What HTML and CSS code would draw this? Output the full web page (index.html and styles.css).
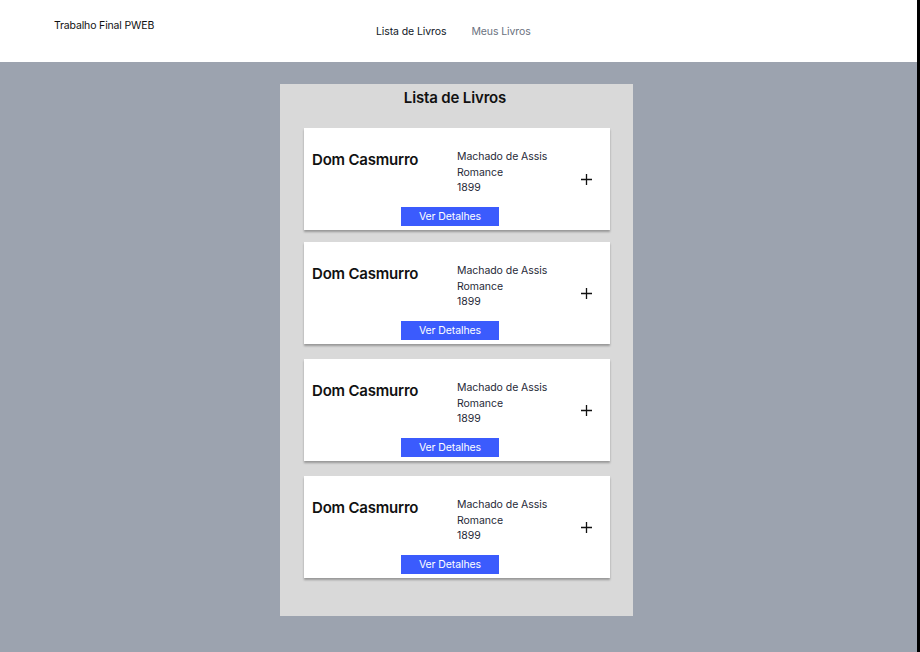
FILE: index.html
```html
<!DOCTYPE html>
<html lang="pt">
<head>
<meta charset="utf-8">
<title>Trabalho Final PWEB</title>
<link rel="stylesheet" href="styles.css">
</head>
<body>
<div class="page">
  <header class="header">
    <div class="brand">Trabalho Final PWEB</div>
    <nav class="nav">
      <a class="nav-link active" href="#">Lista de Livros</a>
      <a class="nav-link" href="#">Meus Livros</a>
    </nav>
  </header>
  <main class="main">
    <section class="panel">
      <h1 class="panel-title">Lista de Livros</h1>
      <div class="cards">
        <article class="card">
          <div class="card-row">
            <h2 class="book-title">Dom Casmurro</h2>
            <div class="book-info"><div>Machado de Assis</div><div>Romance</div><div>1899</div></div>
            <svg class="plus" width="11" height="11" viewBox="0 0 11 11"><path d="M5.5 0v11M0 5.5h11" stroke="#111" stroke-width="1.3"/></svg>
          </div>
          <button class="btn">Ver Detalhes</button>
        </article>
        <article class="card">
          <div class="card-row">
            <h2 class="book-title">Dom Casmurro</h2>
            <div class="book-info"><div>Machado de Assis</div><div>Romance</div><div>1899</div></div>
            <svg class="plus" width="11" height="11" viewBox="0 0 11 11"><path d="M5.5 0v11M0 5.5h11" stroke="#111" stroke-width="1.3"/></svg>
          </div>
          <button class="btn">Ver Detalhes</button>
        </article>
        <article class="card">
          <div class="card-row">
            <h2 class="book-title">Dom Casmurro</h2>
            <div class="book-info"><div>Machado de Assis</div><div>Romance</div><div>1899</div></div>
            <svg class="plus" width="11" height="11" viewBox="0 0 11 11"><path d="M5.5 0v11M0 5.5h11" stroke="#111" stroke-width="1.3"/></svg>
          </div>
          <button class="btn">Ver Detalhes</button>
        </article>
        <article class="card">
          <div class="card-row">
            <h2 class="book-title">Dom Casmurro</h2>
            <div class="book-info"><div>Machado de Assis</div><div>Romance</div><div>1899</div></div>
            <svg class="plus" width="11" height="11" viewBox="0 0 11 11"><path d="M5.5 0v11M0 5.5h11" stroke="#111" stroke-width="1.3"/></svg>
          </div>
          <button class="btn">Ver Detalhes</button>
        </article>
      </div>
    </section>
  </main>
</div>
</body>
</html>
```
FILE: styles.css
```css
* { box-sizing: border-box; }
html, body { margin: 0; padding: 0; height: 100%; }
body {
  font-family: Inter, "Noto Sans", sans-serif;
  color: #111;
  background: #000;
}
.page {
  width: 917px;
  height: 652px;
  display: flex;
  flex-direction: column;
  background: #9ca3af;
}
.header {
  height: 62px;
  background: #fff;
  display: flex;
  align-items: flex-start;
}
.brand {
  font-size: 10.5px;
  letter-spacing: -0.15px;
  color: #111;
  margin: 19px 0 0 54px;
  width: 322px;
}
.nav {
  display: flex;
  gap: 25px;
  margin-top: 25px;
}
.nav-link {
  font-size: 10.5px;
  letter-spacing: -0.1px;
  text-decoration: none;
  color: #6b7280;
}
.nav-link.active { color: #111827; }
.main {
  flex: 1;
  padding: 22px 0 0 280px;
}
.panel {
  width: 353px;
  height: 532px;
  background: #d9d9d9;
  padding: 4px 23px 0 24px;
}
.panel-title {
  margin: 0;
  font-size: 15px;
  font-weight: 600;
  letter-spacing: -0.15px;
  text-align: center;
  line-height: 19px;
  margin-left: -4px;
}
.cards {
  margin-top: 21px;
  display: flex;
  flex-direction: column;
  gap: 12px;
}
.card + .card + .card { margin-top: 3px; }
.card {
  background: #fff;
  height: 102px;
  padding: 20px 8px 0 8px;
  box-shadow: 0 2px 2px rgba(0, 0, 0, 0.3);
}
.card-row {
  display: flex;
  align-items: flex-start;
  height: 47px;
}
.book-title {
  margin: 2px 0 0 0;
  width: 145px;
  font-size: 15px;
  font-weight: 600;
  letter-spacing: -0.2px;
  line-height: 19px;
}
.book-info {
  width: 124px;
  padding-top: 1px;
  font-size: 10.5px;
  letter-spacing: -0.05px;
  line-height: 15.5px;
  color: #1f2937;
}
.plus {
  display: block;
  margin: 26px 0 0 0;
}
.btn {
  display: block;
  margin: 12px 0 0 89px;
  width: 98px;
  height: 19px;
  border: none;
  background: #3b5bfd;
  color: #fff;
  font-family: Inter, "Noto Sans", sans-serif;
  font-size: 10.5px;
  letter-spacing: -0.1px;
  padding: 0;
  line-height: 19px;
}
```
